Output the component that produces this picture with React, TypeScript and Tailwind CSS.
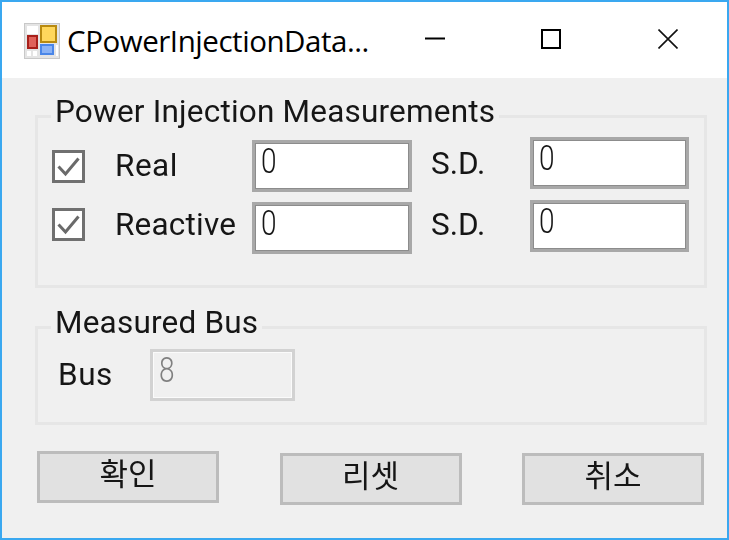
const labelFont = "font-['Roboto','Noto_Sans_CJK_KR',sans-serif] text-[#161616] [filter:blur(0.45px)]";

function Check() {
  return (
    <div className="w-[33px] h-[33px] border-[3px] border-[#707070] bg-white shrink-0 flex items-center justify-center">
      <svg width="27" height="27" viewBox="0 0 27 27" fill="none">
        <path d="M3.5 13.5 L10.5 21 L23.5 5.5" stroke="#6a6a6a" strokeWidth="3" />
      </svg>
    </div>
  );
}

function Field({ w = "w-[160px]", h = "h-[52px]", value = "0", disabled = false }: { w?: string; h?: string; value?: string; disabled?: boolean }) {
  return (
    <div
      className={`${w} ${h} shrink-0 border-[3px] pl-[6px] text-[35px] leading-[38px] font-light ${labelFont} ${
        disabled ? "border-[#d2d2d2] bg-[#f0f0f0] !text-[#808080] shadow-[inset_0_0_0_1px_#fbfbfb]" : "border-[#a8a8a8] bg-white shadow-[inset_0_0_0_1px_#8c8c8c]"
      }`}
    >
      <span className="inline-block origin-left scale-x-[0.8]">{value}</span>
    </div>
  );
}

function Group({ title, className, children }: { title: string; className: string; children: React.ReactNode }) {
  return (
    <div className={`relative border-[3px] border-[#e6e6e6] ${className}`}>
      <div className={`absolute left-[13px] top-[-25px] bg-[#f0f0f0] px-[4px] text-[31.5px] leading-[38px] tracking-[0.2px] whitespace-nowrap ${labelFont}`}>
        {title}
      </div>
      {children}
    </div>
  );
}

function Btn({ label, className }: { label: string; className: string }) {
  return (
    <div className={`w-[182px] h-[52px] border-[3px] border-[#bcbcbc] bg-[#e1e1e1] flex items-center justify-center pb-[3px] text-[31px] ${labelFont} ${className}`}>
      {label}
    </div>
  );
}

const rowText = "text-[31.5px] leading-[38px]";

export default function App() {
  return (
    <div className="w-[729px] h-[540px] border-2 border-[#3aa8f0] flex flex-col bg-[#f0f0f0] overflow-hidden">
      <div className="h-[76px] bg-white flex items-center shrink-0 relative">
        <svg width="36" height="36" viewBox="0 0 36 36" className="ml-[22px] mb-[-1px]">
          <rect x="0.5" y="0.5" width="35" height="35" fill="#e4e4e4" stroke="#c8c8c8" />
          <rect x="3" y="3" width="11" height="8" fill="#fff" />
          <rect x="16" y="2" width="17" height="18" fill="#b88a10" />
          <rect x="18" y="4" width="13" height="14" fill="#ffd75c" />
          <rect x="3" y="12" width="11" height="14" fill="#a8201a" />
          <rect x="5" y="14" width="7" height="10" fill="#e0625a" />
          <rect x="16" y="21" width="14" height="11" fill="#4a86e8" />
          <rect x="18" y="23" width="10" height="7" fill="#8ab2f5" />
          <rect x="3" y="28" width="4" height="5" fill="#fff" />
          <rect x="9" y="28" width="4" height="5" fill="#fff" />
          <rect x="32" y="22" width="2" height="11" fill="#fff" />
        </svg>
        <div className="ml-[7px] mt-[1px] text-[29.5px] leading-[40px] text-black font-['Open_Sans',sans-serif] tracking-[-0.45px] whitespace-nowrap">
          CPowerInjectionData...
        </div>
        <div className="ml-auto mr-[49px] mt-[-3px] flex items-center">
          <svg width="20" height="20" viewBox="0 0 20 20" className="mr-[96px]">
            <path d="M0 9.5H20" stroke="#000" strokeWidth="2" />
          </svg>
          <svg width="20" height="20" viewBox="0 0 20 20" className="mr-[97px]">
            <rect x="1" y="1" width="18" height="18" fill="none" stroke="#000" strokeWidth="2" />
          </svg>
          <svg width="20" height="20" viewBox="0 0 20 20">
            <path d="M0.5 0.5L19.5 19.5M19.5 0.5L0.5 19.5" stroke="#111" strokeWidth="1.6" />
          </svg>
        </div>
      </div>

      <div className="flex-1 px-[33px] pt-[37px] flex flex-col">
        <Group title="Power Injection Measurements" className="w-[672px] h-[173px] pl-[14px] pt-[22px]">
          <div className="flex items-start h-[62px]">
            <div className="mt-[10px]"><Check /></div>
            <div className={`ml-[30px] w-[137px] mt-[7px] tracking-[0.5px] ${rowText} ${labelFont}`}>Real</div>
            <Field />
            <div className={`ml-[19px] w-[99px] mt-[5px] ${rowText} ${labelFont}`}>S.D.</div>
            <div className="-mt-[3px]"><Field w="w-[159px]" /></div>
          </div>
          <div className="flex items-start">
            <div className="mt-[6px]"><Check /></div>
            <div className={`ml-[30px] w-[137px] mt-[4px] tracking-[0.2px] ${rowText} ${labelFont}`}>Reactive</div>
            <Field />
            <div className={`ml-[19px] w-[99px] mt-[4px] ${rowText} ${labelFont}`}>S.D.</div>
            <div className="-mt-[2px]"><Field w="w-[159px]" /></div>
          </div>
        </Group>

        <Group title="Measured Bus" className="w-[672px] h-[99px] mt-[38px] pl-[20px] pt-[20px] flex items-start">
          <div className={`w-[92px] mt-[7px] tracking-[0.5px] ${rowText} ${labelFont}`}>Bus</div>
          <Field value="8" w="w-[145px]" disabled />
        </Group>

        <div className="flex justify-between w-[667px] ml-[2px] mt-[26px] items-start">
          <Btn label="확인" className="" />
          <Btn label="리셋" className="mt-[2px]" />
          <Btn label="취소" className="mt-[2px]" />
        </div>
      </div>
    </div>
  );
}
